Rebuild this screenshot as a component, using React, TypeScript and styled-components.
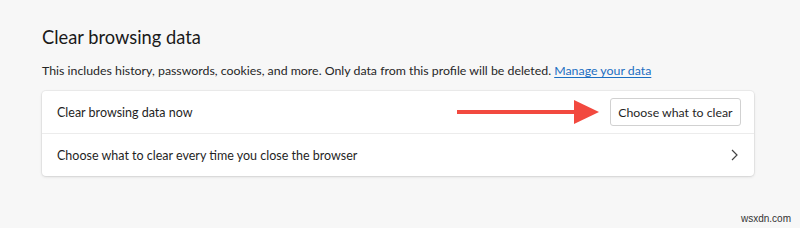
import styled, { createGlobalStyle } from "styled-components";

const GlobalStyle = createGlobalStyle`
  html, body {
    margin: 0;
    padding: 0;
    background: #f7f7f7;
  }
  body {
    font-family: Lato, "Open Sans", sans-serif;
    color: #1f1f1f;
  }
`;

const Page = styled.div`
  width: 800px;
  height: 228px;
  box-sizing: border-box;
  padding: 25px 46px 0 42px;
  position: relative;
  overflow: hidden;
`;

const Title = styled.h2`
  margin: 0;
  font-size: 18.3px;
  font-weight: 400;
  line-height: 24px;
  color: #1a1a1a;
`;

const Description = styled.p`
  margin: 12px 0 0;
  font-size: 12.35px;
  line-height: 20px;
  color: #262626;
`;

const Link = styled.a`
  color: #1b6ec2;
  text-decoration: underline;
  text-underline-offset: 2px;
`;

const Card = styled.div`
  margin-top: 10px;
  background: #ffffff;
  border-radius: 4px;
  box-shadow: 0 0 0 1px rgba(0, 0, 0, 0.04), 0 1px 3px rgba(0, 0, 0, 0.12);
`;

const Row = styled.div<{ divider?: boolean }>`
  height: 42px;
  display: flex;
  align-items: center;
  justify-content: space-between;
  padding: 0 13px 0 15px;
  border-top: ${({ divider }) => (divider ? "1px solid #ececec" : "none")};
  font-size: 12.5px;
  color: #1f1f1f;
`;

const Actions = styled.div`
  display: flex;
  align-items: center;
  gap: 10px;
`;

const Button = styled.button`
  height: 28px;
  padding: 0 7.5px;
  border: 1px solid #d1d1d1;
  border-radius: 3px;
  background: #ffffff;
  font-family: inherit;
  font-size: 12.3px;
  color: #1f1f1f;
`;

const Chevron = styled.svg`
  margin-right: 2px;
`;

const Watermark = styled.span`
  position: absolute;
  right: 9px;
  bottom: 4px;
  font-family: "Liberation Sans", Arial, sans-serif;
  font-size: 10px;
  color: #333;
`;

export default function App() {
  return (
    <>
      <GlobalStyle />
      <Page>
        <Title>Clear browsing data</Title>
        <Description>
          This includes history, passwords, cookies, and more. Only data from this profile will be
          deleted. <Link href="#">Manage your data</Link>
        </Description>
        <Card>
          <Row>
            <span>Clear browsing data now</span>
            <Actions>
              <svg width="143" height="26" viewBox="0 0 143 26">
                <rect x="0" y="11" width="120" height="4" fill="#f2493f" />
                <polygon points="117,1 142,13 117,25" fill="#f2493f" />
              </svg>
              <Button>Choose what to clear</Button>
            </Actions>
          </Row>
          <Row divider>
            <span>Choose what to clear every time you close the browser</span>
            <Chevron width="10" height="14" viewBox="0 0 10 14">
              <path d="M3 2 L8 7 L3 12" fill="none" stroke="#444" strokeWidth="1.2" />
            </Chevron>
          </Row>
        </Card>
        <Watermark>wsxdn.com</Watermark>
      </Page>
    </>
  );
}
